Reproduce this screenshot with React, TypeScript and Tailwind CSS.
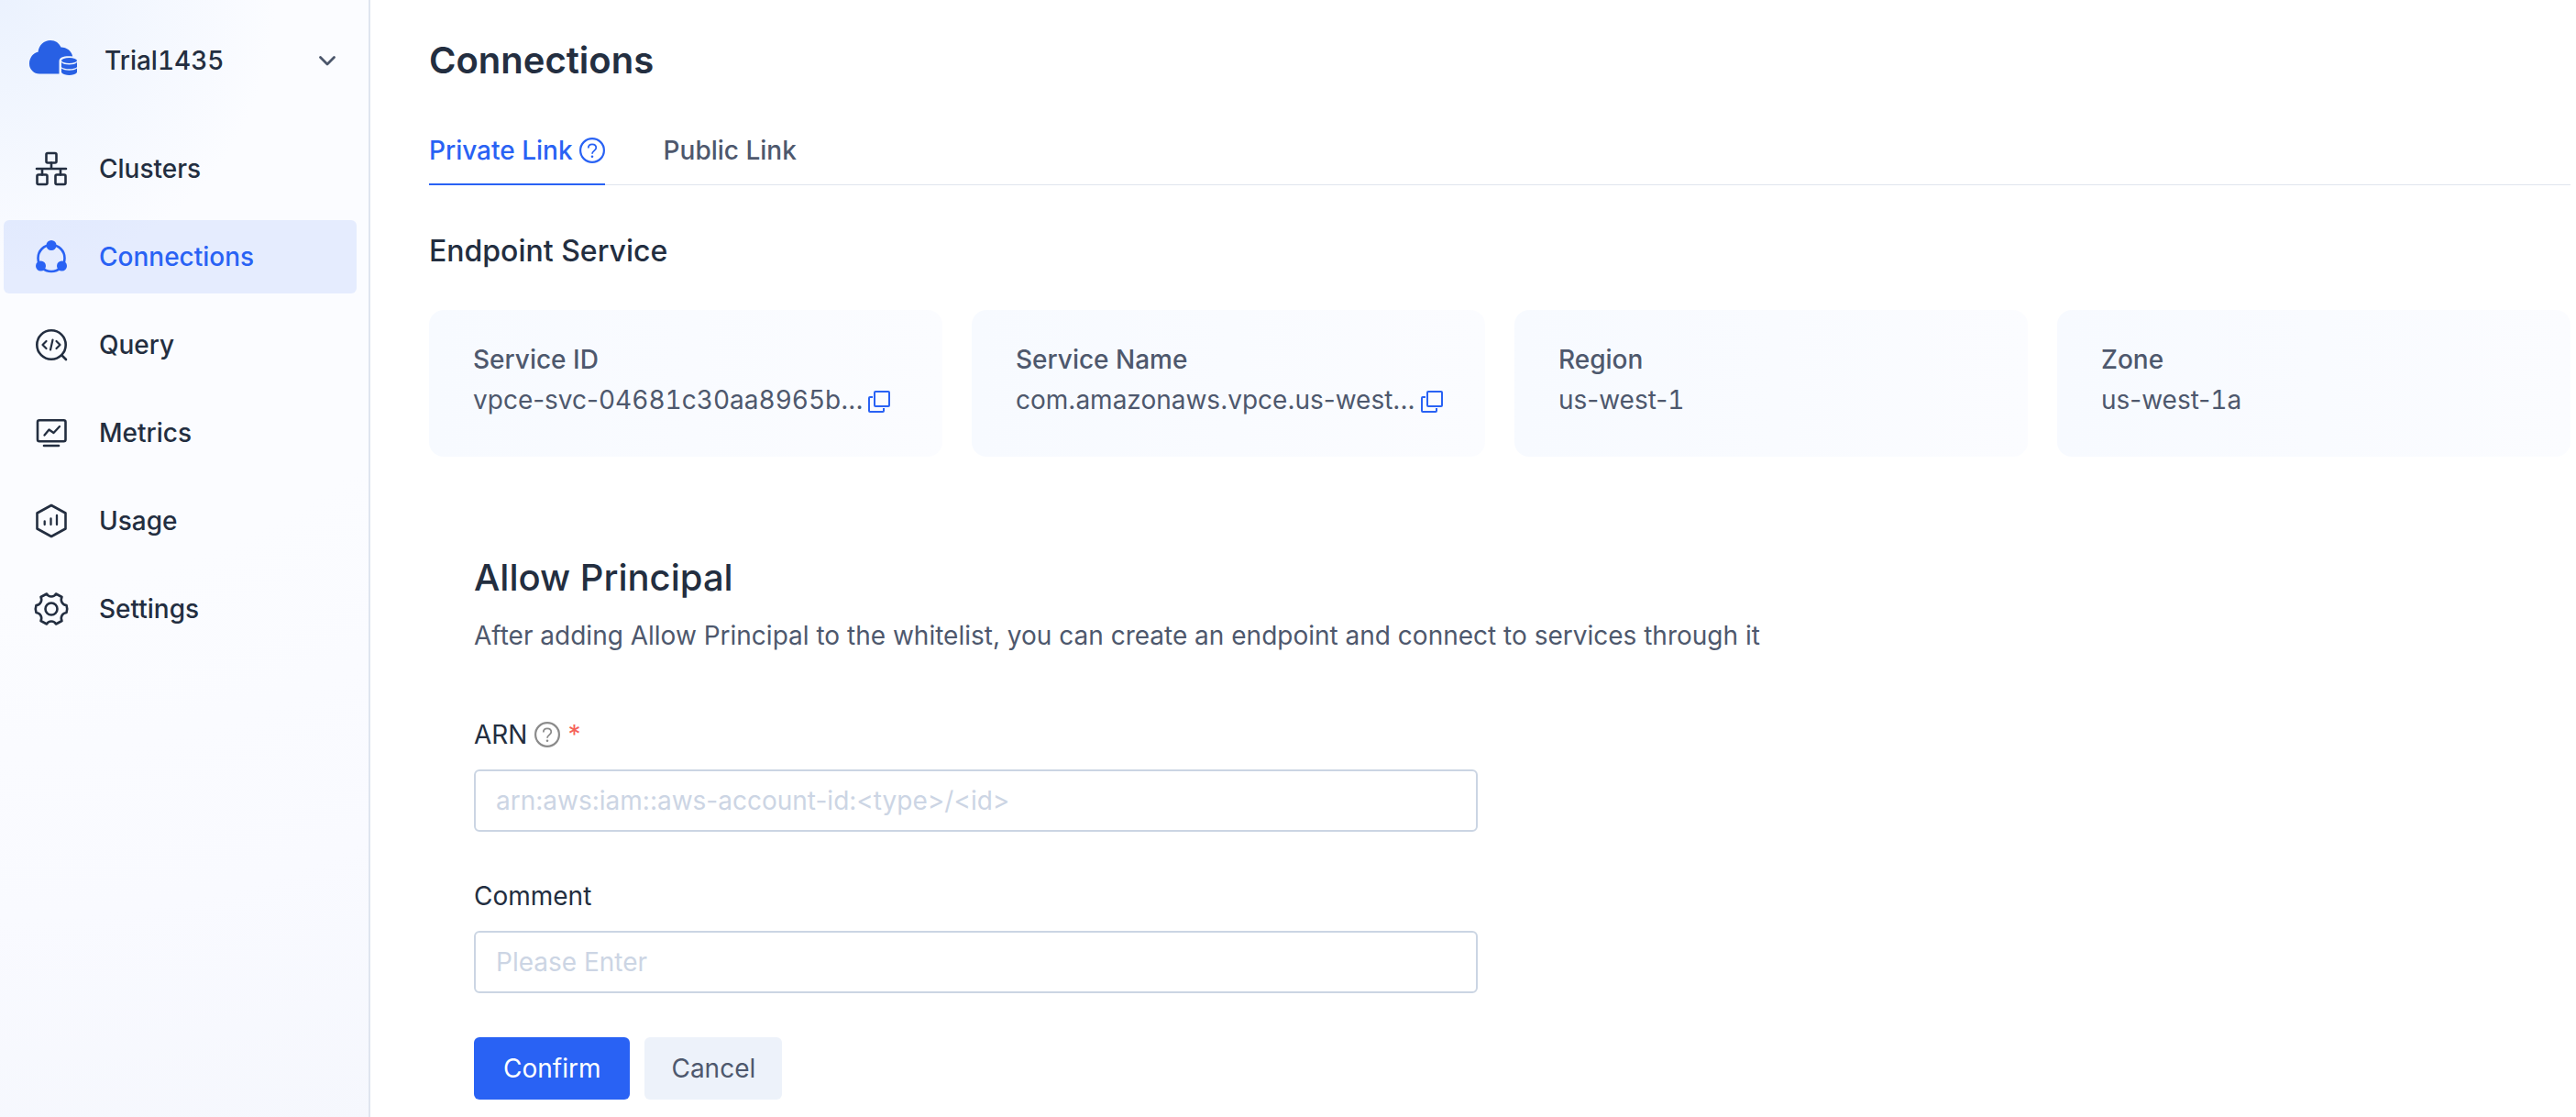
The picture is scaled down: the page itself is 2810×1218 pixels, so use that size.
import type { ReactNode } from "react";

function CloudLogo() {
  return (
    <svg viewBox="0 0 52 38" className="mb-1.5 h-[38px] w-[52px] shrink-0" aria-hidden="true">
      <path
        d="M11 36.500A11 11 0 0 1 0 25.500C0 19 4 14 9.500 12.800C10.500 5 16 0 23 0C28.500 0 32.500 3 34.500 7.500C41 7.800 46 11.500 47.200 17.500C39 16.800 32.500 17.800 32.500 23V36.500Z"
        fill="#2860e4"
      />
      <ellipse cx="43.500" cy="22" rx="8.500" ry="3" fill="#2860e4" />
      <path d="M35 24c2 2 5 2.400 8.500 2.400s6.500-.4 8.500-2.400v5.200c-2 1.600-5 2-8.500 2s-6.500-.4-8.500-2z" fill="#2860e4" />
      <path d="M35 30.600c2 1.800 5 2.200 8.500 2.200s6.500-.4 8.500-2.200v4.400c-2 2.200-5 3-8.500 3s-6.500-.8-8.500-3z" fill="#2860e4" />
    </svg>
  );
}

function NavIcon({ children }: { children: ReactNode }) {
  return (
    <svg
      viewBox="0 0 40 40"
      className="size-10 shrink-0"
      fill="none"
      stroke="currentColor"
      strokeWidth="2.600"
      strokeLinecap="round"
      strokeLinejoin="round"
      aria-hidden="true"
    >
      {children}
    </svg>
  );
}

const clusters = (
  <NavIcon>
    <rect x="14.500" y="3" width="11" height="10.500" rx="1.500" />
    <rect x="4.500" y="26.500" width="11" height="10.500" rx="1.500" />
    <rect x="24.500" y="26.500" width="11" height="10.500" rx="1.500" />
    <path d="M20 13.500V20M4 20h32M10 20v6.500M30 20v6.500" />
  </NavIcon>
);

const connections = (
  <NavIcon>
    <circle cx="20" cy="21.500" r="14.500" />
    <circle cx="20" cy="7.500" r="5.500" fill="currentColor" stroke="none" />
    <circle cx="8.500" cy="30" r="5.500" fill="currentColor" stroke="none" />
    <circle cx="31.500" cy="30" r="5.500" fill="currentColor" stroke="none" />
  </NavIcon>
);

const query = (
  <NavIcon>
    <circle cx="20" cy="20" r="15.700" />
    <path d="M31.500 31.500L36 36" />
    <path d="M14.500 16l-4 4 4 4M25.500 16l4 4-4 4M21.500 14.500l-2.500 11" strokeWidth="2.200" />
  </NavIcon>
);

const metrics = (
  <NavIcon>
    <rect x="5" y="6.300" width="30.500" height="23" rx="2" />
    <path d="M12 34h16" />
    <path d="M12.500 22.500l5-6 5 3.500 6.500-7" strokeWidth="2.300" />
  </NavIcon>
);

const usage = (
  <NavIcon>
    <path d="M20 3L35.500 11.500V28.500L20 37L4.500 28.500V11.500Z" />
    <path d="M12.700 20.500v3.500M19.500 17.500V24M26 14v10" strokeWidth="2.300" />
  </NavIcon>
);

const settings = (
  <NavIcon>
    <circle cx="20" cy="20" r="6.500" />
    <path d="M15 3.500C17 7.500 23 7.500 25 3.500L31.500 7C29.500 11 32 15.500 36.500 16Q38 20 36.500 24C32 24.500 29.500 29 31.500 33L25 36.500C23 32.500 17 32.500 15 36.500L8.500 33C10.500 29 8 24.500 3.500 24Q2 20 3.500 16C8 15.500 10.500 11 8.500 7Z" />
  </NavIcon>
);

const navItems = [
  { label: "Clusters", icon: clusters },
  { label: "Connections", icon: connections, active: true },
  { label: "Query", icon: query },
  { label: "Metrics", icon: metrics },
  { label: "Usage", icon: usage },
  { label: "Settings", icon: settings },
];

function HelpIcon() {
  return (
    <svg viewBox="0 0 28 28" className="size-7 shrink-0" fill="none" stroke="currentColor" aria-hidden="true">
      <circle cx="14" cy="14" r="12.900" strokeWidth="2.200" />
      <path d="M9.800 11.500C9.800 8.800 11.600 7.300 14 7.300s4.300 1.500 4.300 3.800c0 3.200-4.300 3.400-4.300 6.600" strokeWidth="1.800" />
      <circle cx="14" cy="20.800" r="1.300" fill="currentColor" stroke="none" />
    </svg>
  );
}

function CopyIcon() {
  return (
    <svg viewBox="0 0 24 24" className="size-6" fill="none" stroke="currentColor" strokeWidth="2" strokeLinejoin="round" aria-hidden="true">
      <rect x="7" y="1" width="16" height="16" rx="1" />
      <path d="M5 7H2a1 1 0 0 0-1 1v14a1 1 0 0 0 1 1h14a1 1 0 0 0 1-1v-3" />
    </svg>
  );
}

// Digits get equal widths; dashes and dots around them stay proportional.
function Identifier({ value }: { value: string }) {
  return (
    <span>
      {value.split(/(\d+)/).map((part, i) =>
        i % 2 === 1 ? (
          <span key={i} className="tabular-nums">
            {part}
          </span>
        ) : (
          part
        ),
      )}
    </span>
  );
}

const cards = [
  { label: "Service ID", value: "vpce-svc-04681c30aa8965b...", copy: true },
  { label: "Service Name", value: "com.amazonaws.vpce.us-west...", copy: true },
  { label: "Region", value: "us-west-1" },
  { label: "Zone", value: "us-west-1a" },
];

const inputClass =
  "mt-4 block h-[68px] w-full rounded-md border-2 border-[#cbd5e3] bg-white px-[22px] placeholder:text-[#ccd5e4] focus:outline-[#2962f4]";

export default function App() {
  return (
    <div className="flex min-h-screen bg-white font-['Inter','Liberation_Sans',sans-serif] text-[28px] leading-[44px] text-[#232e40]">
      <aside className="w-[404px] shrink-0 border-r-2 border-[#dfe5ef] bg-[radial-gradient(circle_at_0_0,#ebf2fe_0,#fbfcff_300px,#fbfcff_640px,#f9faff_1000px,#f5f7fd_1300px)]">
        <button type="button" className="flex h-32 w-full items-center pt-1 pr-[35px] pl-8 text-left font-medium">
          <CloudLogo />
          <span className="ml-[30px] flex-1 tabular-nums">Trial1435</span>
          <svg viewBox="0 0 20 14" className="h-[14px] w-5" fill="none" stroke="#4b566b" strokeWidth="2.800" strokeLinecap="round" strokeLinejoin="round" aria-hidden="true">
            <path d="M2.500 3.500l7.500 7.500 7.500-7.500" />
          </svg>
        </button>
        <nav className="mt-4 flex flex-col gap-4 pr-[13px] pl-1" aria-label="Main">
          {navItems.map((item) => (
            <a
              key={item.label}
              href="#"
              aria-current={item.active ? "page" : undefined}
              className={
                item.active
                  ? "flex h-20 items-center gap-8 rounded-md bg-[#2962f4]/10 pl-8 font-medium text-[#2962f4]"
                  : "flex h-20 items-center gap-8 rounded-md pl-8 font-medium"
              }
            >
              {item.icon}
              {item.label}
            </a>
          ))}
        </nav>
      </aside>

      <main className="min-w-0 flex-1 pt-9 pr-1.5 pl-16">
        <h1 className="text-[40px] leading-[60px] font-semibold">Connections</h1>

        <div role="tablist" className="mt-9 flex gap-16 border-b border-[#e0e4ee] font-medium">
          <button
            type="button"
            role="tab"
            aria-selected="true"
            className="-mb-px flex h-[70px] items-center gap-[7px] border-b-2 border-[#2962f4] pb-1 text-[#2962f4]"
          >
            Private Link
            <HelpIcon />
          </button>
          <button type="button" role="tab" aria-selected="false" className="flex h-[68px] items-center pb-1 text-[#4e586d]">
            Public Link
          </button>
        </div>

        <h2 className="mt-12 text-[32px] leading-[48px] font-medium">Endpoint Service</h2>

        <div className="mt-10 grid grid-cols-4 gap-8 text-[#4e586d]">
          {cards.map((card) => (
            <section key={card.label} className="h-40 rounded-2xl bg-linear-to-r from-[#f7faff] to-[#fbfcff] px-12 pt-8">
              <h3 className="font-medium">{card.label}</h3>
              <div className="flex items-center gap-1.5 whitespace-nowrap">
                <Identifier value={card.value} />
                {card.copy && (
                  <button type="button" aria-label={"Copy " + card.label} className="pt-1 text-[#2962f4]">
                    <CopyIcon />
                  </button>
                )}
              </div>
            </section>
          ))}
        </div>

        <form className="mt-24 ml-[49px] pb-4">
          <h2 className="pt-1.5 text-[40px] leading-[60px] font-medium">Allow Principal</h2>
          <p className="mt-[11px] text-[#4e586d]">
            After adding Allow Principal to the whitelist, you can create an endpoint and connect to services through it
          </p>

          <div className="mt-16 w-[1095px] max-w-full">
            <label htmlFor="arn" className="flex items-center gap-2">
              ARN
              <span className="text-[#8b8b8b]">
                <HelpIcon />
              </span>
              <span className="text-[#f56359]">*</span>
            </label>
            <input id="arn" type="text" placeholder="arn:aws:iam::aws-account-id:&lt;type&gt;/&lt;id&gt;" className={inputClass} />
          </div>

          <div className="mt-12 w-[1095px] max-w-full">
            <label htmlFor="comment" className="block">
              Comment
            </label>
            <input id="comment" type="text" placeholder="Please Enter" className={inputClass} />
          </div>

          <div className="mt-12 flex gap-4">
            <button type="button" className="h-[68px] rounded-md bg-[#2962f4] px-8 text-white">
              Confirm
            </button>
            <button type="button" className="h-[68px] rounded-md bg-[#edf2fa] px-[29px] text-[#4e586d]">
              Cancel
            </button>
          </div>
        </form>
      </main>
    </div>
  );
}
